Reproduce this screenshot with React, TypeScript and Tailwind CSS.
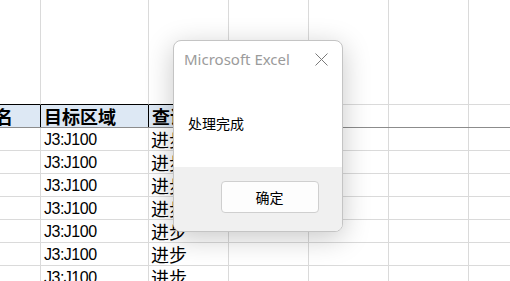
import React from 'react';

const cjk = { fontFamily: '"Noto Sans CJK SC", sans-serif' };
const latin = { fontFamily: '"Liberation Sans", "Noto Sans CJK SC", sans-serif' };

const restCols = ['d', 'e', 'f', 'g'];
const dataRows = Array.from({ length: 7 }, (_, i) => i);

export default function App() {
    return (
        <div className="relative w-[510px] h-[281px] overflow-hidden bg-white">
            <div className="-ml-[44px] flex flex-col">
                {/* tall first row */}
                <div className="flex h-[105px]">
                    <div className="w-[85px] shrink-0 border-r border-b border-r-[#dadada] border-b-black" />
                    <div className="w-[108px] shrink-0 border-r border-b border-r-[#dadada] border-b-black" />
                    <div className="w-[80px] shrink-0 border-r border-b border-r-[#dadada] border-b-black" />
                    {restCols.map((c) => (
                        <div key={c} className="w-[80px] shrink-0 border-r border-b border-[#dadada]" />
                    ))}
                </div>

                {/* header row */}
                <div className="flex h-[23px] border-b border-[#8c8c8c]">
                    <div
                        className="w-[85px] shrink-0 border-r border-black bg-[#dde8f4] pl-[3px] flex items-end text-[18px] font-bold leading-[22px] text-black"
                        style={cjk}
                    >
                        字段名
                    </div>
                    <div
                        className="w-[108px] shrink-0 border-r border-black bg-[#dde8f4] pl-[3px] flex items-end text-[18px] font-bold leading-[22px] text-black"
                        style={cjk}
                    >
                        目标区域
                    </div>
                    <div
                        className="w-[80px] shrink-0 border-r border-black bg-[#dde8f4] pl-[3px] flex items-end text-[18px] font-bold leading-[22px] text-black"
                        style={cjk}
                    >
                        查询方式
                    </div>
                    {restCols.map((c) => (
                        <div key={c} className="w-[80px] shrink-0 border-r border-[#dadada]" />
                    ))}
                </div>

                {/* data rows */}
                {dataRows.map((r) => (
                    <div key={r} className="flex h-[23px] border-b border-[#dadada]">
                        <div className="w-[85px] shrink-0 border-r border-[#dadada]" />
                        <div
                            className="w-[108px] shrink-0 border-r border-[#dadada] pl-[3px] flex items-end text-[16px] tracking-[-0.5px] leading-[21px] text-black"
                            style={latin}
                        >
                            J3:J100
                        </div>
                        <div
                            className="w-[80px] shrink-0 border-r border-[#dadada] pl-[2px] flex items-end text-[18px] leading-[22px] text-black"
                            style={cjk}
                        >
                            进步
                        </div>
                        {restCols.map((c) => (
                            <div key={c} className="w-[80px] shrink-0 border-r border-[#dadada]" />
                        ))}
                    </div>
                ))}
            </div>

            {/* message box */}
            <div className="absolute left-[173px] top-[40px] w-[170px] h-[192px] rounded-[8px] border border-[#c4c4c4] bg-white overflow-hidden flex flex-col shadow-[0_6px_28px_rgba(0,0,0,0.22)]">
                <div className="h-[37px] flex items-center justify-between pl-[10px] pr-[14px]">
                    <span
                        className="text-[15px] text-[#9b9b9b]"
                        style={{ fontFamily: '"Noto Sans", "Open Sans", sans-serif' }}
                    >
                        Microsoft Excel
                    </span>
                    <svg width="13" height="13" viewBox="0 0 13 13" className="text-[#7a7a7a]">
                        <path d="M0.5 0.5 L12.5 12.5 M12.5 0.5 L0.5 12.5" stroke="currentColor" strokeWidth="1" fill="none" />
                    </svg>
                </div>
                <div className="flex-1 pl-[14px] pt-[35px] text-[14px] text-black leading-[20px]" style={cjk}>
                    处理完成
                </div>
                <div className="h-[64px] bg-[#f0f0f0] flex items-center justify-center pl-[23px] pb-[4px]">
                    <button
                        className="w-[98px] h-[32px] rounded-[4px] border border-[#cfcfcf] bg-[#fdfdfd] text-[14px] text-black"
                        style={cjk}
                    >
                        确定
                    </button>
                </div>
            </div>
        </div>
    );
}
